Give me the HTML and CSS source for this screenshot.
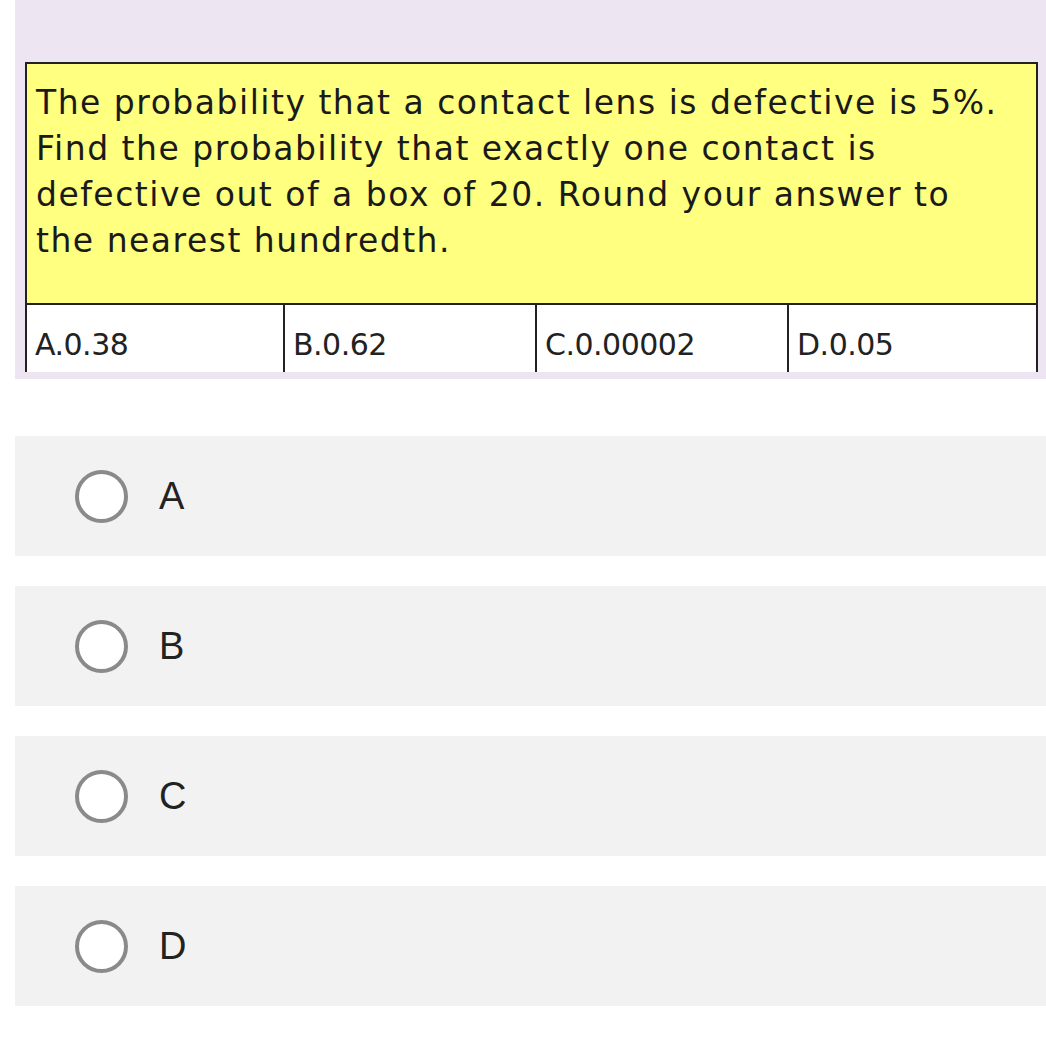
FILE: index.html
```html
<!DOCTYPE html>
<html>
<head>
<meta charset="utf-8">
<link rel="stylesheet" href="styles.css">
</head>
<body>
<div class="page">
  <div class="figure">
    <div class="question">
      <div class="qtext">The probability that a contact lens is defective is 5%.<br>Find the probability that exactly one contact is<br>defective out of a box of 20. Round your answer to<br>the nearest hundredth.</div>
      <div class="choices">
        <div class="cell">A.0.38</div>
        <div class="cell">B.0.62</div>
        <div class="cell">C.0.00002</div>
        <div class="cell">D.0.05</div>
      </div>
    </div>
  </div>
  <div class="options">
    <div class="option"><span class="radio"></span><span class="label">A</span></div>
    <div class="option"><span class="radio"></span><span class="label">B</span></div>
    <div class="option"><span class="radio"></span><span class="label">C</span></div>
    <div class="option"><span class="radio"></span><span class="label">D</span></div>
  </div>
</div>
</body>
</html>
```
FILE: styles.css
```css
html, body {
  margin: 0;
  padding: 0;
  background: #ffffff;
}
.page {
  padding-left: 15px;
  width: 1031px;
}
.figure {
  background: #eee5f2;
  height: 379px;
  padding: 62px 8px 0 10px;
  box-sizing: border-box;
  overflow: hidden;
}
.question {
  width: 1013px;
}
.qtext {
  background: #ffff80;
  border: 2px solid #222;
  height: 243px;
  box-sizing: border-box;
  padding: 16px 8px 0 9px;
  font-family: "DejaVu Sans", sans-serif;
  font-size: 33px;
  line-height: 46px;
  color: #1a1a1a;
  letter-spacing: 1.5px;
  white-space: nowrap;
}
.choices {
  display: grid;
  grid-template-columns: 258px 252px 252px 251px;
  background: #fff;
  height: 67px;
}
.cell {
  border-left: 2px solid #222;
  padding: 23px 0 0 8px;
  font-family: "DejaVu Sans", sans-serif;
  font-size: 30px;
  line-height: 34px;
  color: #222;
  letter-spacing: -0.5px;
}
.cell:last-child {
  border-right: 2px solid #222;
}
.options {
  padding-top: 57px;
  display: flex;
  flex-direction: column;
  gap: 30px;
}
.option {
  background: #f2f2f2;
  height: 120px;
  display: flex;
  align-items: center;
  padding-left: 60px;
}
.radio {
  width: 45px;
  height: 45px;
  border: 4px solid #8a8a8a;
  border-radius: 50%;
  background: #fff;
  flex: none;
}
.label {
  margin-left: 31px;
  font-family: "Liberation Sans", Arial, sans-serif;
  font-size: 38px;
  color: #222;
}
```
